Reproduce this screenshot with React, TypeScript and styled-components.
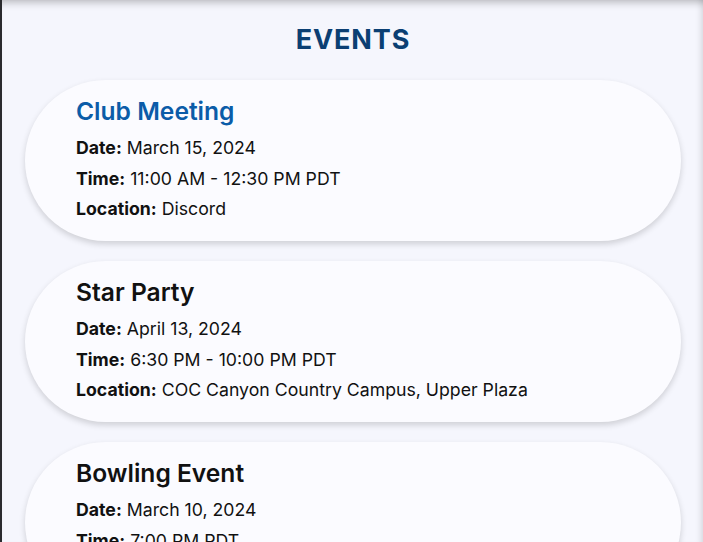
import React from "react";
import styled, { createGlobalStyle } from "styled-components";

const GlobalStyle = createGlobalStyle`
  html, body { margin: 0; padding: 0; }
  body {
    background: #f5f6fd;
    font-family: Inter, "Noto Sans", sans-serif;
    color: #111;
    overflow: hidden;
  }
`;

const Page = styled.main`
  position: relative;
  height: 542px;
  box-sizing: border-box;
  border-left: 2px solid #2a2a2e;
  background: #f5f6fd;
  padding: 20px 22px 0 23px;
  box-shadow: inset 0 9px 8px -7px rgba(0, 0, 0, 0.28),
    inset -7px 0 6px -5px rgba(0, 0, 0, 0.12);
  overflow: hidden;
`;

const Heading = styled.h1`
  margin: 0 0 21px;
  text-align: center;
  font-family: Inter, sans-serif;
  font-weight: 700;
  font-size: 27px;
  line-height: 39px;
  color: #0b3f73;
  letter-spacing: 0.9px;
`;

const List = styled.div`
  display: flex;
  flex-direction: column;
  gap: 20px;
`;

const Card = styled.section`
  box-sizing: border-box;
  width: 656px;
  height: 161px;
  border-radius: 81px;
  background: #fbfbff;
  box-shadow: 0 3px 6px rgba(0, 0, 0, 0.16);
  padding: 17px 52px 0 51px;
`;

const Title = styled.h2<{ $accent?: boolean }>`
  margin: 0 0 7px;
  font-size: 24.6px;
  font-weight: 600;
  line-height: 29px;
  color: ${(p) => (p.$accent ? "#0b5ca8" : "#111")};
`;

const Row = styled.p`
  margin: 0;
  font-size: 17.7px;
  line-height: 30.6px;
  color: #111;
`;

const Label = styled.strong`
  font-weight: 700;
`;

const events = [
  {
    title: "Club Meeting",
    accent: true,
    date: "March 15, 2024",
    time: "11:00 AM - 12:30 PM PDT",
    location: "Discord",
  },
  {
    title: "Star Party",
    date: "April 13, 2024",
    time: "6:30 PM - 10:00 PM PDT",
    location: "COC Canyon Country Campus, Upper Plaza",
  },
  {
    title: "Bowling Event",
    date: "March 10, 2024",
    time: "7:00 PM PDT",
    location: "Valencia Lanes",
  },
];

export default function App() {
  return (
    <>
      <GlobalStyle />
      <Page>
        <Heading>EVENTS</Heading>
        <List>
          {events.map((e) => (
            <Card key={e.title}>
              <Title $accent={e.accent}>{e.title}</Title>
              <Row>
                <Label>Date:</Label> {e.date}
              </Row>
              <Row>
                <Label>Time:</Label> {e.time}
              </Row>
              <Row>
                <Label>Location:</Label> {e.location}
              </Row>
            </Card>
          ))}
        </List>
      </Page>
    </>
  );
}
